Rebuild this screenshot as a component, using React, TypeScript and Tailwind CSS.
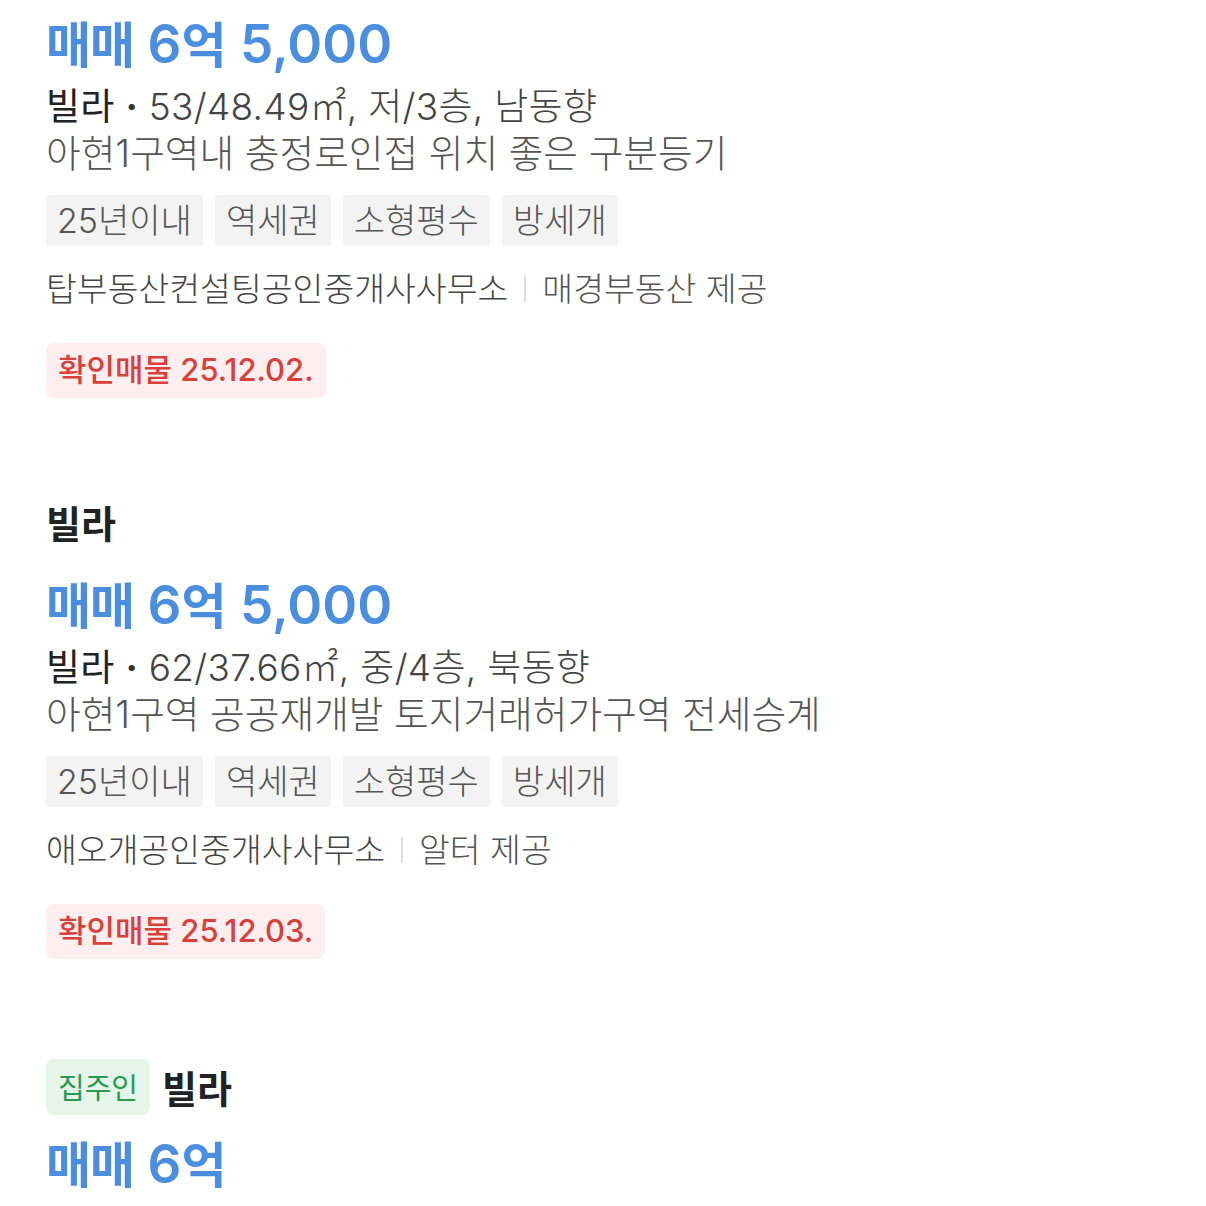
import React from "react";

const font = { fontFamily: 'Inter, "Noto Sans CJK KR", "Noto Sans", sans-serif' };
const kr = { fontFamily: '"Noto Sans CJK KR", "Noto Sans", sans-serif' };

function Price({ full }: { full: boolean }) {
  return (
    <div className="h-[62px] flex items-center text-[#4a8edf] font-semibold whitespace-nowrap">
      <span className="text-[53px] leading-[62px]">
        <span className="text-[49px] font-bold tracking-[-1px]" style={kr}>매매</span>{" "}
        6<span className="text-[49px] font-bold" style={kr}>억</span>
        {full ? " 5,000" : ""}
      </span>
    </div>
  );
}

function Tags() {
  const tags = ["25년이내", "역세권", "소형평수", "방세개"];
  return (
    <div className="flex gap-[12px] mt-[19px]">
      {tags.map((t) => (
        <div key={t} className="h-[51px] px-[11px] flex items-center bg-[#f3f3f3] rounded-[3px] text-[34px] font-light text-[#555]">
          {t}
        </div>
      ))}
    </div>
  );
}

function Listing({ area, desc, agency, provider, date }: { area: string; desc: string; agency: string; provider: string; date: string }) {
  return (
    <div>
      <Price full />
      <div className="mt-[9px] text-[37px] leading-[48px] text-[#444] font-light whitespace-nowrap tracking-[0.3px]">
        <span className="text-[#222] font-normal">빌라</span> <span className="font-bold text-[#333]">·</span> {area}
      </div>
      <div className="text-[37.7px] leading-[45px] text-[#555] font-light whitespace-nowrap">{desc}</div>
      <Tags />
      <div className="flex items-center mt-[19px] text-[33.5px] text-[#444] font-light leading-[48px] whitespace-nowrap">
        <span>{agency}</span>
        <span className="w-[2px] h-[26px] bg-[#dddddd] mx-[16px]"></span>
        <span className="text-[#555]">{provider}</span>
      </div>
      <div className="mt-[30px] inline-flex items-center h-[55px] px-[12px] bg-[#fdefef] rounded-[8px] text-[31px] font-medium text-[#d9403a]">
        확인매물 {date}
      </div>
    </div>
  );
}

export default function App() {
  return (
    <div className="w-[1206px] h-[1206px] bg-white overflow-hidden pl-[46px] pt-[12px]" style={font}>
      <Listing area="53/48.49㎡, 저/3층, 남동향" desc="아현1구역내 충정로인접 위치 좋은 구분등기" agency="탑부동산컨설팅공인중개사사무소" provider="매경부동산 제공" date="25.12.02." />
      <div className="mt-[96px] text-[38px] font-bold text-[#222] leading-[56px]" style={kr}>빌라</div>
      <div className="mt-[23px]">
        <Listing area="62/37.66㎡, 중/4층, 북동향" desc="아현1구역 공공재개발 토지거래허가구역 전세승계" agency="애오개공인중개사사무소" provider="알터 제공" date="25.12.03." />
      </div>
      <div className="mt-[99px] flex items-center gap-[12px]">
        <div className="h-[56px] px-[12px] flex items-center bg-[#e5f5ea] rounded-[8px] text-[29px] text-[#2a9a52]" style={kr}>집주인</div>
        <div className="text-[38px] font-bold text-[#222]" style={kr}>빌라</div>
      </div>
      <div className="mt-[17px]">
        <Price full={false} />
      </div>
    </div>
  );
}
